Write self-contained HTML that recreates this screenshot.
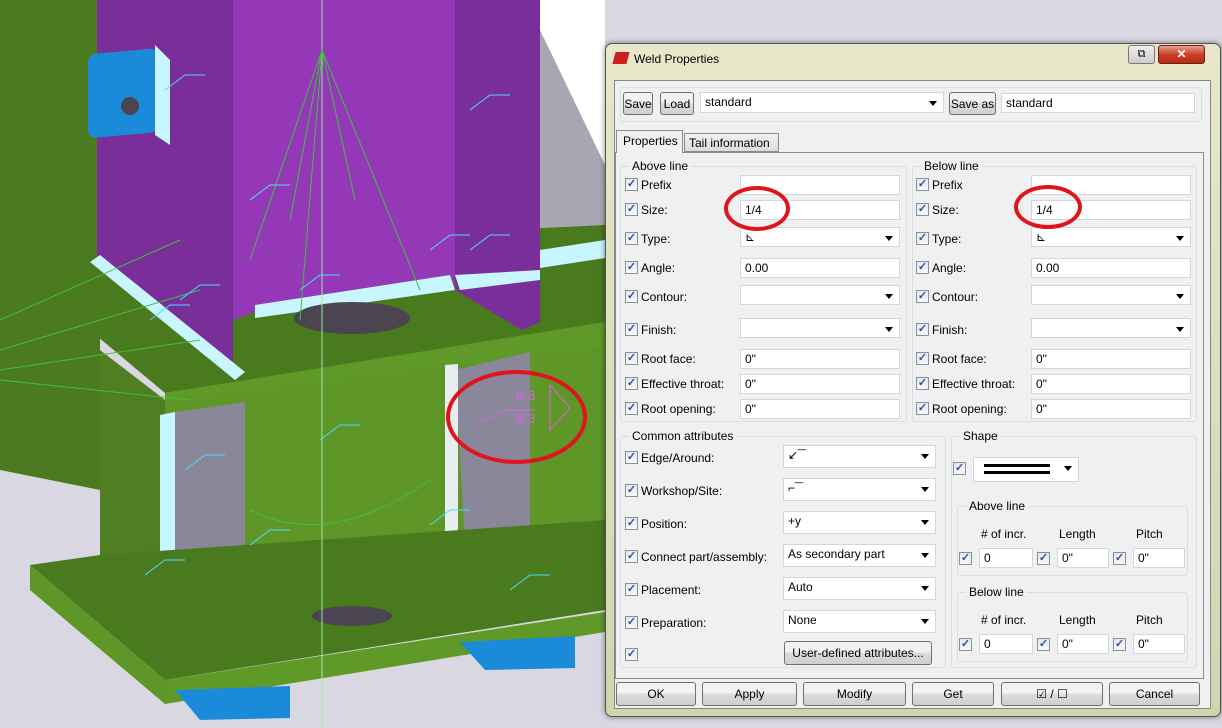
<!DOCTYPE html>
<html><head><meta charset="utf-8"><style>
*{box-sizing:border-box;margin:0;padding:0}
body{width:1222px;height:728px;overflow:hidden;position:relative;background:#d9d8e2;font-family:"Liberation Sans",sans-serif;font-size:12px;color:#000}
.a{position:absolute}
.dlg{position:absolute;left:605px;top:43px;width:616px;height:674px;border:1px solid #555;border-radius:7px;background:linear-gradient(#e9e7c9,#d9dcb8 60%,#cfd6ae);box-shadow:0 0 6px rgba(0,0,0,.5)}
.client{position:absolute;left:614px;top:80px;width:597px;height:629px;background:#f0f0f0;border:1px solid #888}
.grp{position:absolute;border:1px solid #d5dfe5;border-radius:3px}
.gl{position:absolute;top:-8px;left:8px;background:#f0f0f0;padding:0 3px;color:#000}
.cb{position:absolute;width:13px;height:13px;border:1px solid #8e8f8f;background:linear-gradient(#dfe9f5,#f4f8fc);font-size:11px;line-height:11px;text-align:center;color:#3c4d8c;font-weight:bold}
.lb{position:absolute}
.in{position:absolute;height:20px;background:#fff;border:1px solid #d0d7e0;padding:2px 4px;line-height:15px}
.dd::after{content:"";position:absolute;right:6px;top:8px;border:4px solid transparent;border-top:5px solid #000;border-bottom:0}
.btn{position:absolute;height:24px;border:1px solid #707070;border-radius:3px;background:linear-gradient(#f2f2f2 45%,#dcdcdc 50%,#cfcfcf);text-align:center;line-height:22px}
.ell{position:absolute;border:4px solid #e0141c;border-radius:50%}
</style></head><body>
<svg class="a" style="left:0;top:0" width="610" height="728">
<rect width="610" height="728" fill="#d9d8e2"/>
<polygon points="0,0 100,0 100,490 0,470" fill="#4c7a20"/>
<polygon points="540,0 605,0 605,280 540,300" fill="#a9a5b2"/>
<polygon points="540,0 605,0 605,165 540,30" fill="#fff"/>
<polygon points="30,280 100,250 605,225 605,325 165,393" fill="#4a7a1e"/>
<polygon points="97,0 233,0 233,375 97,262" fill="#7a2e9a"/>
<polygon points="233,0 455,0 455,282 255,312 233,320" fill="#9438b8"/>
<polygon points="455,0 540,0 540,322 522,330 455,290" fill="#7a2e9a"/>
<polygon points="90,262 100,255 245,372 235,380" fill="#c8f6ff"/>
<polygon points="255,305 450,275 455,290 255,318" fill="#c8f6ff"/>
<polygon points="455,275 540,270 540,280 460,290" fill="#c8f6ff"/>
<polygon points="540,250 605,240 605,258 540,268" fill="#c8f6ff"/>
<ellipse cx="352" cy="318" rx="58" ry="16" fill="#4a4550"/>
<polygon points="165,393 605,322 605,346 165,414" fill="#5f9a28"/>
<polygon points="100,410 605,346 605,545 100,590" fill="#5e9628"/>
<polygon points="100,350 165,400 165,600 100,580" fill="#4f7f22"/>
<polygon points="175,412 245,402 245,665 230,665 175,600" fill="#8a879a"/>
<polygon points="160,415 175,412 175,590 160,590" fill="#c8f6ff"/>
<polygon points="455,370 530,352 530,612 510,612 465,545" fill="#8a879a"/>
<polygon points="445,365 458,364 458,540 445,540" fill="#e8eef0"/>
<polygon points="30,565 100,555 605,520 605,610 165,680" fill="#4a7a1e"/>
<ellipse cx="352" cy="616" rx="40" ry="10" fill="#4a4550"/>
<polygon points="165,680 605,612 605,632 165,704" fill="#5f9a28"/>
<polygon points="30,565 165,680 165,704 30,590" fill="#5e9628"/>
<polygon points="175,690 290,686 290,718 200,720" fill="#1a8bd8"/>
<polygon points="460,642 575,636 575,668 485,670" fill="#1a8bd8"/>
<rect x="88" y="62" width="70" height="84" rx="8" fill="#1a8bd8" transform="skewY(-5)"/>
<polygon points="155,45 170,60 170,145 155,135" fill="#c8f6ff"/>
<circle cx="130" cy="106" r="9" fill="#4a4550"/>
<line x1="322" y1="0" x2="322" y2="728" stroke="#9fe89f" stroke-width="1"/>
<g stroke="#3fc03f" fill="none" stroke-width="1">
<path d="M322 50 L250 260 M322 50 L290 220 M322 50 L300 320 M322 50 L355 200 M322 50 L420 290 M0 320 L180 240 M0 350 L200 290 M0 370 L200 340 M0 380 L190 400"/>
<path d="M250 510 Q330 550 430 480"/>
</g>
<g stroke="#4fd8ff" fill="none"><path d="M165 90l20-15h20 M470 110l20-15h20 M250 200l20-15h20 M430 250l20-15h20 M470 250l20-15h20 M150 320l20-15h20 M180 300l20-15h20 M300 290l20-15h20 M320 440l20-15h20 M185 470l20-15h20 M145 575l20-15h20 M430 525l20-15h20 M510 590l20-15h20 M250 545l20-15h20"/></g>
<g fill="none" stroke="#e060e0"><path d="M475 425l30-15h30 M550 385v45l20-22z"/></g>
<text x="516" y="400" fill="#e060e0" font-size="14">6.3</text>
<text x="516" y="423" fill="#e060e0" font-size="14">6.3</text>
</svg>
<div class="ell" style="left:446px;top:370px;width:141px;height:94px"></div>

<div class="dlg"></div>
<div class="a" style="left:614px;top:52px;width:14px;height:12px;background:#c8201c;transform:skewX(-15deg)"></div>
<div class="a" style="left:634px;top:52px;font-size:12px">Weld Properties</div>
<div class="a" style="left:1128px;top:45px;width:27px;height:19px;border:1px solid #777;border-radius:3px;background:linear-gradient(#eee,#ccc);text-align:center;font-size:11px;line-height:17px">⧉</div>
<div class="a" style="left:1158px;top:45px;width:47px;height:19px;border:1px solid #6b1d12;border-radius:3px;background:linear-gradient(#e8a090,#c8402a 50%,#b52a15);color:#fff;text-align:center;font-weight:bold;line-height:17px">✕</div>
<div class="client"></div>

<div class="grp" style="left:620px;top:87px;width:582px;height:35px"></div>
<div class="btn" style="left:623px;top:92px;width:30px;height:23px">Save</div>
<div class="btn" style="left:660px;top:92px;width:34px;height:23px">Load</div>
<div class="in dd" style="left:700px;top:92px;width:244px;height:21px">standard</div>
<div class="btn" style="left:949px;top:92px;width:47px;height:23px">Save as</div>
<div class="in" style="left:1001px;top:93px;width:194px">standard</div>

<div class="a" style="left:615px;top:152px;width:589px;height:527px;border:1px solid #898c95;background:#f0f0f0"></div>
<div class="a" style="left:616px;top:130px;width:67px;height:23px;border:1px solid #898c95;border-bottom:0;background:#f0f0f0;padding:3px 6px">Properties</div>
<div class="a" style="left:684px;top:133px;width:95px;height:19px;border:1px solid #898c95;background:linear-gradient(#f2f2f2,#dcdcdc);padding:2px 4px">Tail information</div>

<div class="grp" style="left:620px;top:166px;width:287px;height:256px"><span class="gl">Above line</span></div>
<div class="grp" style="left:912px;top:166px;width:285px;height:256px"><span class="gl">Below line</span></div>

<div class="cb" style="left:625px;top:178px">✓</div><div class="lb" style="left:641px;top:178px">Prefix</div><div class="in" style="left:740px;top:175px;width:160px"></div>
<div class="cb" style="left:625px;top:203px">✓</div><div class="lb" style="left:641px;top:203px">Size:</div><div class="in" style="left:740px;top:200px;width:160px">1/4</div>
<div class="cb" style="left:625px;top:232px">✓</div><div class="lb" style="left:641px;top:232px">Type:</div><div class="in dd" style="left:740px;top:227px;width:160px">⊾</div>
<div class="cb" style="left:625px;top:261px">✓</div><div class="lb" style="left:641px;top:261px">Angle:</div><div class="in" style="left:740px;top:258px;width:160px">0.00</div>
<div class="cb" style="left:625px;top:290px">✓</div><div class="lb" style="left:641px;top:290px">Contour:</div><div class="in dd" style="left:740px;top:285px;width:160px"></div>
<div class="cb" style="left:625px;top:323px">✓</div><div class="lb" style="left:641px;top:323px">Finish:</div><div class="in dd" style="left:740px;top:318px;width:160px"></div>
<div class="cb" style="left:625px;top:352px">✓</div><div class="lb" style="left:641px;top:352px">Root face:</div><div class="in" style="left:740px;top:349px;width:160px">0"</div>
<div class="cb" style="left:625px;top:377px">✓</div><div class="lb" style="left:641px;top:377px">Effective throat:</div><div class="in" style="left:740px;top:374px;width:160px">0"</div>
<div class="cb" style="left:625px;top:402px">✓</div><div class="lb" style="left:641px;top:402px">Root opening:</div><div class="in" style="left:740px;top:399px;width:160px">0"</div>

<div class="cb" style="left:916px;top:178px">✓</div><div class="lb" style="left:932px;top:178px">Prefix</div><div class="in" style="left:1031px;top:175px;width:160px"></div>
<div class="cb" style="left:916px;top:203px">✓</div><div class="lb" style="left:932px;top:203px">Size:</div><div class="in" style="left:1031px;top:200px;width:160px">1/4</div>
<div class="cb" style="left:916px;top:232px">✓</div><div class="lb" style="left:932px;top:232px">Type:</div><div class="in dd" style="left:1031px;top:227px;width:160px">⊾</div>
<div class="cb" style="left:916px;top:261px">✓</div><div class="lb" style="left:932px;top:261px">Angle:</div><div class="in" style="left:1031px;top:258px;width:160px">0.00</div>
<div class="cb" style="left:916px;top:290px">✓</div><div class="lb" style="left:932px;top:290px">Contour:</div><div class="in dd" style="left:1031px;top:285px;width:160px"></div>
<div class="cb" style="left:916px;top:323px">✓</div><div class="lb" style="left:932px;top:323px">Finish:</div><div class="in dd" style="left:1031px;top:318px;width:160px"></div>
<div class="cb" style="left:916px;top:352px">✓</div><div class="lb" style="left:932px;top:352px">Root face:</div><div class="in" style="left:1031px;top:349px;width:160px">0"</div>
<div class="cb" style="left:916px;top:377px">✓</div><div class="lb" style="left:932px;top:377px">Effective throat:</div><div class="in" style="left:1031px;top:374px;width:160px">0"</div>
<div class="cb" style="left:916px;top:402px">✓</div><div class="lb" style="left:932px;top:402px">Root opening:</div><div class="in" style="left:1031px;top:399px;width:160px">0"</div>

<div class="ell" style="left:724px;top:186px;width:66px;height:45px"></div>
<div class="ell" style="left:1014px;top:185px;width:68px;height:44px"></div>

<div class="grp" style="left:620px;top:436px;width:326px;height:232px"><span class="gl">Common attributes</span></div>
<div class="cb" style="left:625px;top:451px">✓</div><div class="lb" style="left:641px;top:451px">Edge/Around:</div><div class="in dd" style="left:783px;top:445px;width:153px;height:23px">↙‾‾</div>
<div class="cb" style="left:625px;top:484px">✓</div><div class="lb" style="left:641px;top:484px">Workshop/Site:</div><div class="in dd" style="left:783px;top:478px;width:153px;height:23px">⌐‾‾</div>
<div class="cb" style="left:625px;top:517px">✓</div><div class="lb" style="left:641px;top:517px">Position:</div><div class="in dd" style="left:783px;top:511px;width:153px;height:23px">+y</div>
<div class="cb" style="left:625px;top:550px">✓</div><div class="lb" style="left:641px;top:550px">Connect part/assembly:</div><div class="in dd" style="left:783px;top:544px;width:153px;height:23px">As secondary part</div>
<div class="cb" style="left:625px;top:583px">✓</div><div class="lb" style="left:641px;top:583px">Placement:</div><div class="in dd" style="left:783px;top:577px;width:153px;height:23px">Auto</div>
<div class="cb" style="left:625px;top:616px">✓</div><div class="lb" style="left:641px;top:616px">Preparation:</div><div class="in dd" style="left:783px;top:610px;width:153px;height:23px">None</div>
<div class="cb" style="left:625px;top:648px">✓</div>
<div class="btn" style="left:784px;top:641px;width:148px">User-defined attributes...</div>

<div class="grp" style="left:951px;top:436px;width:246px;height:232px"><span class="gl">Shape</span></div>
<div class="cb" style="left:953px;top:462px">✓</div>
<div class="in dd" style="left:973px;top:457px;width:106px;height:25px"><div class="a" style="left:10px;top:6px;width:66px;height:3px;background:#000"></div><div class="a" style="left:10px;top:13px;width:66px;height:3px;background:#000"></div></div>

<div class="grp" style="left:957px;top:506px;width:231px;height:70px"><span class="gl">Above line</span></div>
<div class="lb" style="left:981px;top:527px"># of incr.</div><div class="lb" style="left:1059px;top:527px">Length</div><div class="lb" style="left:1136px;top:527px">Pitch</div>
<div class="cb" style="left:959px;top:552px">✓</div><div class="in" style="left:979px;top:548px;width:54px">0</div>
<div class="cb" style="left:1037px;top:552px">✓</div><div class="in" style="left:1057px;top:548px;width:52px">0"</div>
<div class="cb" style="left:1113px;top:552px">✓</div><div class="in" style="left:1133px;top:548px;width:52px">0"</div>

<div class="grp" style="left:957px;top:592px;width:231px;height:70px"><span class="gl">Below line</span></div>
<div class="lb" style="left:981px;top:613px"># of incr.</div><div class="lb" style="left:1059px;top:613px">Length</div><div class="lb" style="left:1136px;top:613px">Pitch</div>
<div class="cb" style="left:959px;top:638px">✓</div><div class="in" style="left:979px;top:634px;width:54px">0</div>
<div class="cb" style="left:1037px;top:638px">✓</div><div class="in" style="left:1057px;top:634px;width:52px">0"</div>
<div class="cb" style="left:1113px;top:638px">✓</div><div class="in" style="left:1133px;top:634px;width:52px">0"</div>

<div class="btn" style="left:616px;top:682px;width:80px">OK</div>
<div class="btn" style="left:702px;top:682px;width:95px">Apply</div>
<div class="btn" style="left:803px;top:682px;width:103px">Modify</div>
<div class="btn" style="left:912px;top:682px;width:82px">Get</div>
<div class="btn" style="left:1001px;top:682px;width:102px">☑ / ☐</div>
<div class="btn" style="left:1109px;top:682px;width:91px">Cancel</div>
</body></html>
